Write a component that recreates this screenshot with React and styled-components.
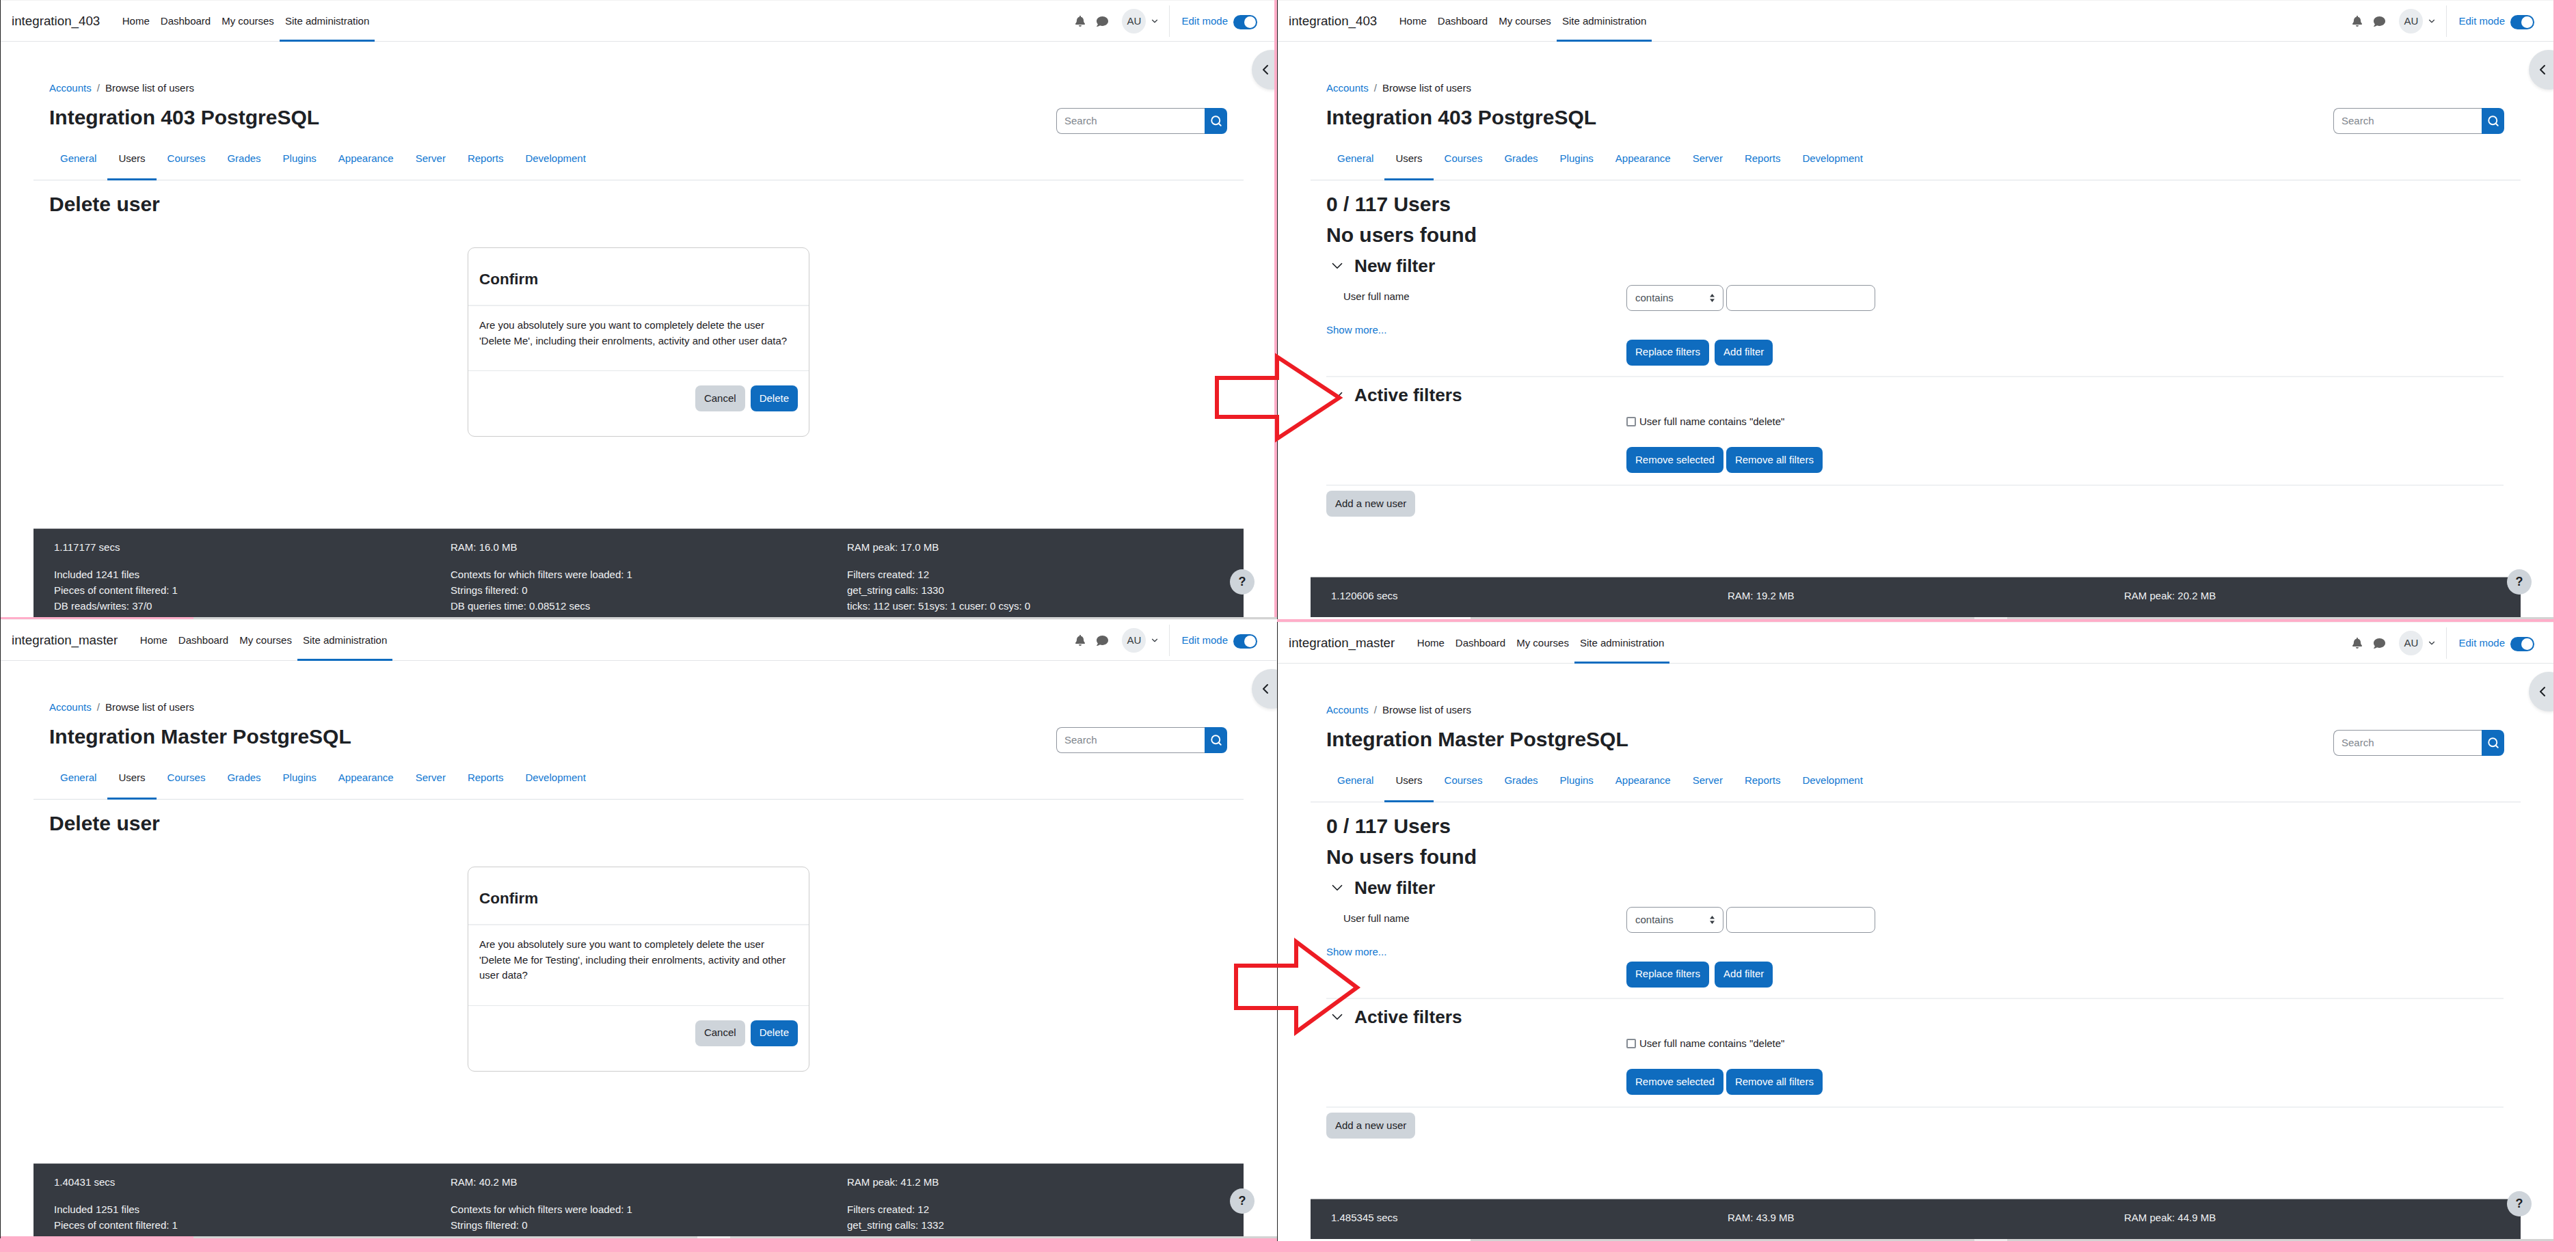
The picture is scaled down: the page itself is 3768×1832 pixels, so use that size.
import { createGlobalStyle, styled } from "styled-components";
import { FaBell, FaComment } from "react-icons/fa";
import { ChevronDown, ChevronLeft, Search } from "lucide-react";

const GlobalStyle = createGlobalStyle`
  html, body {
    margin: 0;
    padding: 0;
    background: #ffaec9;
  }
  * {
    box-sizing: border-box;
  }
`

const Stage = styled.div`
  position: relative;
  width: 3768px;
  height: 1832px;
  display: flex;
  overflow: hidden;
  background: #ffaec9;
  font-family: "Liberation Sans", Arial, sans-serif;
  font-size: 15px;
  line-height: 22.5px;
  color: #1d2125;
`
const Column = styled.div`
  width: ${({ $width }) => $width}px;
  display: flex;
  flex-direction: column;
  gap: ${({ $gap }) => $gap}px;
`
const Frame = styled.div`
  position: relative;
  width: ${({ $width }) => $width}px;
  height: 906px;
  overflow: hidden;
  background: #fff;
  border-left: 1px solid #222;
`
const Inner = styled.div`
  width: 1866px;
`

/* top bar */
const NavBar = styled.header`
  height: 61px;
  display: flex;
  align-items: stretch;
  padding: 1px 28px 0 16px;
  background: #fff;
  border-top: 1px solid #f2f2f2;
  border-bottom: 1px solid #e3e5e7;
`
const Brand = styled.span`
  align-self: center;
  font-size: 18.75px;
  margin-right: 24.5px;
`
const NavLink = styled.span`
  display: flex;
  align-items: center;
  padding: 2px 8px 0;
  border-bottom: 3px solid ${({ $active }) => ($active ? "#0f6cbf" : "transparent")};
  margin-bottom: -1px;
`
const NavRight = styled.div`
  margin-left: auto;
  display: flex;
  align-items: center;
  color: #616161;
`
const IconSlot = styled.span`
  display: flex;
  margin-right: ${({ $gap }) => $gap}px;
`
const Avatar = styled.span`
  width: 35px;
  height: 36px;
  border-radius: 50%;
  background: #e9ecef;
  color: #343a40;
  display: flex;
  align-items: center;
  justify-content: center;
  margin-right: 6px;
`
const Divider = styled.span`
  width: 1px;
  height: 46px;
  background: #e3e5e7;
  margin: 0 17px 0 14px;
`
const EditLabel = styled.span`
  color: #1177d1;
  margin-right: 8px;
`
const Toggle = styled.span`
  width: 35px;
  height: 21px;
  border-radius: 11px;
  background: #0f6cbf;
  display: flex;
  align-items: center;
  justify-content: flex-end;
  padding-right: 2px;
  margin-top: 2px;

  &::after {
    content: "";
    width: 17px;
    height: 17px;
    border-radius: 50%;
    background: #fff;
  }
`

/* overlays */
const DrawerToggle = styled.span`
  position: absolute;
  top: 73px;
  left: 1830px;
  width: 58px;
  height: 58px;
  border-radius: 50%;
  background: #dee2e6;
  color: #1d2125;
  box-shadow: 0 2px 4px rgba(0, 0, 0, 0.08);
  display: flex;
  align-items: center;
  padding-left: 8px;
`
const HelpButton = styled.span`
  position: absolute;
  top: 833px;
  left: 1798px;
  width: 36px;
  height: 37px;
  border-radius: 50%;
  background: #ced4da;
  font-size: 18px;
  font-weight: 700;
  display: flex;
  align-items: center;
  justify-content: center;
`
const ScrollStrip = styled.div`
  position: absolute;
  left: -1px;
  right: 0;
  bottom: 0;
  height: 3px;
  background: #d3d3d3;
  display: flex;
`
const ScrollThumb = styled.span`
  width: 283px;
  background: ${({ $color }) => $color};
`
const ScrollGap = styled.span`
  width: 48px;
  margin-left: 737px;
  background: ${({ $show }) => ($show ? "#ececec" : "transparent")};
`
const FrameEdge = styled.span`
  position: absolute;
  top: 0;
  right: 0;
  bottom: 3px;
  width: 4px;
  background: #ffaec9;
`
const Arrows = styled.svg`
  position: absolute;
  inset: 0;
  pointer-events: none;
`

/* page */
const Region = styled.div`
  padding: 0 48px;
`
const PageHead = styled.div`
  padding: 57px 23px 0;
`
const Crumbs = styled.div`
  display: flex;
  gap: 8px;
  height: 22.5px;
`
const Link = styled.span`
  color: #1177d1;
`
const CrumbSep = styled.span`
  color: #6a737b;
`
const TitleRow = styled.div`
  display: flex;
  justify-content: space-between;
  align-items: flex-start;
  margin-top: 13.5px;
  height: 42px;
`
const PageTitle = styled.h1`
  margin: 0;
  font-size: 30px;
  line-height: 36px;
  font-weight: 700;
`
const SearchBox = styled.div`
  width: 250px;
  height: 38px;
  margin-top: 4px;
  margin-right: 1px;
  display: flex;
`
const SearchField = styled.input`
  flex: 1;
  min-width: 0;
  border: 1px solid #8f959e;
  border-right: none;
  border-radius: 8px 0 0 8px;
  padding: 0 11px;
  font: inherit;
  &::placeholder {
    color: #7f868d;
    opacity: 1;
  }
`
const SearchButton = styled.span`
  width: 33px;
  background: #0f6cbf;
  color: #fff;
  border-radius: 0 8px 8px 0;
  display: flex;
  align-items: center;
  justify-content: center;
`
const TabRow = styled.nav`
  display: flex;
  height: 63px;
  margin-top: 5px;
  padding: 0 23px;
  border-bottom: 1px solid #dee2e6;
`
const Tab = styled.span`
  display: flex;
  align-items: center;
  height: 63px;
  padding: 2px 16px 0;
  color: ${({ $active }) => ($active ? "#1d2125" : "#1177d1")};
  border-bottom: 3px solid ${({ $active }) => ($active ? "#0f6cbf" : "transparent")};
`
const Main = styled.main`
  padding: 17px 23px 0;
`
const Heading = styled.h2`
  margin: ${({ $top }) => $top || 0}px 0 0;
  font-size: 30px;
  line-height: 36px;
  font-weight: 700;
`

/* confirm card */
const ConfirmCard = styled.section`
  width: 500px;
  margin: 45px auto 0;
  background: #fff;
  border: 1px solid #ccc;
  border-radius: 10px;
`
const CardHead = styled.div`
  height: 85px;
  display: flex;
  align-items: center;
  padding: 9px 16px 0;
  border-bottom: 2px solid #eceef0;
`
const CardTitle = styled.h4`
  margin: 0;
  font-size: 22.5px;
  font-weight: 700;
`
const CardBody = styled.p`
  margin: 0;
  padding: 17px 16px 32px;
  border-bottom: 1px solid #e5e8ea;
`
const CardFoot = styled.div`
  display: flex;
  justify-content: flex-end;
  gap: 8px;
  padding: 21px 16px 36px;
`
const Button = styled.button`
  height: 38px;
  padding: 0 13px;
  border: none;
  border-radius: 8px;
  font: inherit;
  background: ${({ $variant }) => ($variant === "primary" ? "#0f6cbf" : "#ced4da")};
  color: ${({ $variant }) => ($variant === "primary" ? "#fff" : "#1d2125")};
`

/* user filters */
const FilterTitle = styled.h3`
  display: flex;
  align-items: center;
  margin: ${({ $top }) => $top}px 0 0;
  font-size: 26.25px;
  line-height: 32px;
  font-weight: 700;
`
const Chevron = styled.span`
  display: flex;
  justify-content: center;
  width: 32px;
  margin-right: 9px;
`
const FieldRow = styled.div`
  display: grid;
  grid-template-columns: 439px 1fr;
  margin-top: ${({ $top }) => $top}px;
`
const FieldLabel = styled.span`
  padding: 6px 0 0 25px;
`
const Controls = styled.div`
  grid-column: ${({ $column }) => $column || "auto"};
  display: flex;
  align-items: center;
  gap: ${({ $gap }) => $gap}px;
`
const SelectBox = styled.div`
  width: 141.5px;
  height: 38px;
  border: 1px solid #8f959e;
  border-radius: 8px;
  display: flex;
  align-items: center;
  justify-content: space-between;
  padding: 0 11px 0 12px;
  color: #495057;
`
const TextField = styled.input`
  width: 218px;
  height: 38px;
  border: 1px solid #8f959e;
  border-radius: 8px;
`
const ShowMore = styled.div`
  margin-top: 17px;
`
const Rule = styled.hr`
  margin: ${({ $top }) => $top}px 2px 0 0;
  border: none;
  border-top: 2px solid #eff1f3;
`
const CheckBox = styled.span`
  width: 14px;
  height: 14px;
  border: 2px solid #868c94;
  border-radius: 2px;
  background: #fff;
  margin-top: 1px;
`
const AddUser = styled.div`
  margin-top: 7px;
`

/* performance footer */
const Footer = styled.footer`
  margin-top: ${({ $top }) => $top}px;
  background: #363a41;
  border-top: 1px solid #a9abae;
  color: #f1f3f5;
  padding: 16px 30px 30px;
`
const StatGrid = styled.div`
  display: grid;
  grid-template-columns: repeat(3, 580px);
  margin-top: ${({ $top }) => $top || 0}px;
`
const Stat = styled.span`
  display: block;
  height: 23px;
`

const tabs = ["General", "Users", "Courses", "Grades", "Plugins", "Appearance", "Server", "Reports", "Development"];
const links = ["Home", "Dashboard", "My courses", "Site administration"];

function TopBar({ site }) {
  return (
    <NavBar>
      <Brand>{site}</Brand>
      {links.map((link) => (
        <NavLink key={link} $active={link === "Site administration"}>{link}</NavLink>
      ))}
      <NavRight>
        <IconSlot $gap={16}><FaBell size={16} /></IconSlot>
        <IconSlot $gap={20}><FaComment size={17} /></IconSlot>
        <Avatar>AU</Avatar>
        <ChevronDown size={14} color="#343a40" strokeWidth={2} />
        <Divider />
        <EditLabel>Edit mode</EditLabel>
        <Toggle />
      </NavRight>
    </NavBar>
  );
}

function PageHeader({ title }) {
  return (
    <>
      <PageHead>
        <Crumbs>
          <Link>Accounts</Link>
          <CrumbSep>/</CrumbSep>
          <span>Browse list of users</span>
        </Crumbs>
        <TitleRow>
          <PageTitle>{title}</PageTitle>
          <SearchBox>
            <SearchField placeholder="Search" />
            <SearchButton><Search size={18} strokeWidth={2.5} /></SearchButton>
          </SearchBox>
        </TitleRow>
      </PageHead>
      <TabRow>
        {tabs.map((tab) => (
          <Tab key={tab} $active={tab === "Users"}>{tab}</Tab>
        ))}
      </TabRow>
    </>
  );
}

function Stats({ top, rows }) {
  return (
    <Footer $top={top}>
      {rows.map((row, index) => (
        <StatGrid key={index} $top={index === 1 ? 17 : 0}>
          {row.map((item) => <Stat key={item}>{item}</Stat>)}
        </StatGrid>
      ))}
    </Footer>
  );
}

function DeletePage({ site, title, message, stats }) {
  return (
    <Inner>
      <TopBar site={site} />
      <Region>
        <PageHeader title={title} />
        <Main>
          <Heading>Delete user</Heading>
          <ConfirmCard>
            <CardHead><CardTitle>Confirm</CardTitle></CardHead>
            <CardBody>{message}</CardBody>
            <CardFoot>
              <Button>Cancel</Button>
              <Button $variant="primary">Delete</Button>
            </CardFoot>
          </ConfirmCard>
        </Main>
        <Stats top={134} rows={stats} />
      </Region>
    </Inner>
  );
}

function FilterPage({ site, title, stats }) {
  return (
    <Inner>
      <TopBar site={site} />
      <Region>
        <PageHeader title={title} />
        <Main>
          <Heading>0 / 117 Users</Heading>
          <Heading $top={9}>No users found</Heading>
          <FilterTitle $top={11}>
            <Chevron><ChevronDown size={26} strokeWidth={1.6} /></Chevron>New filter
          </FilterTitle>
          <FieldRow $top={12}>
            <FieldLabel>User full name</FieldLabel>
            <Controls $gap={4}>
              <SelectBox>
                contains
                <svg width="9" height="14" viewBox="0 0 9 14">
                  <path d="M4.5 1 8 5.5H1zM4.5 13 1 8.5h7z" fill="#343a40" />
                </svg>
              </SelectBox>
              <TextField />
            </Controls>
          </FieldRow>
          <ShowMore><Link>Show more...</Link></ShowMore>
          <FieldRow $top={2}>
            <Controls $column="2" $gap={8}>
              <Button $variant="primary">Replace filters</Button>
              <Button $variant="primary">Add filter</Button>
            </Controls>
          </FieldRow>
          <Rule $top={15} />
          <FilterTitle $top={10}>
            <Chevron><ChevronDown size={26} strokeWidth={1.6} /></Chevron>Active filters
          </FilterTitle>
          <FieldRow $top={12}>
            <Controls $column="2" $gap={5}>
              <CheckBox />
              <span>User full name contains "delete"</span>
            </Controls>
          </FieldRow>
          <FieldRow $top={26}>
            <Controls $column="2" $gap={4}>
              <Button $variant="primary">Remove selected</Button>
              <Button $variant="primary">Remove all filters</Button>
            </Controls>
          </FieldRow>
          <Rule $top={17} />
          <AddUser><Button>Add a new user</Button></AddUser>
        </Main>
        <Stats top={88} rows={stats} />
      </Region>
    </Inner>
  );
}

function Chrome({ thumb, light, edge }) {
  return (
    <>
      <DrawerToggle><ChevronLeft size={24} strokeWidth={2} /></DrawerToggle>
      <HelpButton>?</HelpButton>
      <ScrollStrip>
        <ScrollThumb $color={thumb} />
        <ScrollGap $show={light} />
      </ScrollStrip>
      {edge && <FrameEdge />}
    </>
  );
}

export default function App() {
  return (
    <Stage>
      <GlobalStyle />
      <Column $width={1868}>
        <Frame $width={1868}>
          <DeletePage
            site="integration_403"
            title="Integration 403 PostgreSQL"
            message="Are you absolutely sure you want to completely delete the user 'Delete Me', including their enrolments, activity and other user data?"
            stats={[
              ["1.117177 secs", "RAM: 16.0 MB", "RAM peak: 17.0 MB"],
              ["Included 1241 files", "Contexts for which filters were loaded: 1", "Filters created: 12"],
              ["Pieces of content filtered: 1", "Strings filtered: 0", "get_string calls: 1330"],
              ["DB reads/writes: 37/0", "DB queries time: 0.08512 secs", "ticks: 112 user: 51sys: 1 cuser: 0 csys: 0"],
            ]}
          />
          <Chrome thumb="#ffaec9" edge />
        </Frame>
        <Frame $width={1868}>
          <DeletePage
            site="integration_master"
            title="Integration Master PostgreSQL"
            message="Are you absolutely sure you want to completely delete the user 'Delete Me for Testing', including their enrolments, activity and other user data?"
            stats={[
              ["1.40431 secs", "RAM: 40.2 MB", "RAM peak: 41.2 MB"],
              ["Included 1251 files", "Contexts for which filters were loaded: 1", "Filters created: 12"],
              ["Pieces of content filtered: 1", "Strings filtered: 0", "get_string calls: 1332"],
            ]}
          />
          <Chrome thumb="#ffaec9" light />
        </Frame>
      </Column>
      <Column $width={1867} $gap={4}>
        <Frame $width={1867}>
          <FilterPage
            site="integration_403"
            title="Integration 403 PostgreSQL"
            stats={[["1.120606 secs", "RAM: 19.2 MB", "RAM peak: 20.2 MB"]]}
          />
          <Chrome thumb="#fff" light />
        </Frame>
        <Frame $width={1867}>
          <FilterPage
            site="integration_master"
            title="Integration Master PostgreSQL"
            stats={[["1.485345 secs", "RAM: 43.9 MB", "RAM peak: 44.9 MB"]]}
          />
          <Chrome thumb="#fff" light />
        </Frame>
      </Column>
      <Arrows width="3768" height="1832" viewBox="0 0 3768 1832">
        <polygon
          points="1780,553 1868,553 1868,522 1959,582 1868,642 1868,610 1780,610"
          fill="none" stroke="#ed1c24" strokeWidth="6"
        />
        <polygon
          points="1808,1413 1896,1413 1896,1378 1985,1445 1896,1510 1896,1475 1808,1475"
          fill="none" stroke="#ed1c24" strokeWidth="6"
        />
      </Arrows>
    </Stage>
  );
}
